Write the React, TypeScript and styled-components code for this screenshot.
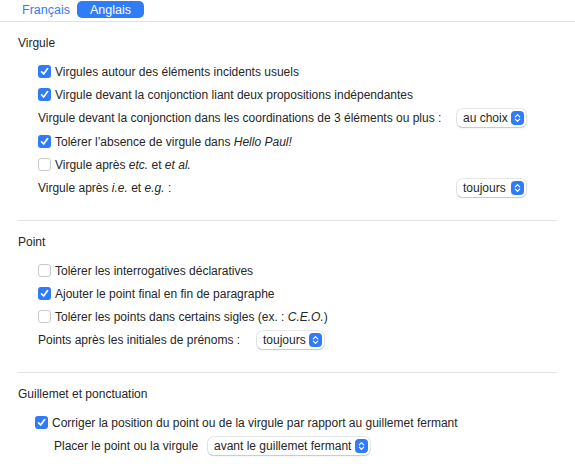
import React from 'react';
import styled, { createGlobalStyle } from 'styled-components';

const ACCENT = '#2f7cf6';
const TEXT = '#262626';

const GlobalStyle = createGlobalStyle`
  html, body {
    margin: 0;
    padding: 0;
    background: #ffffff;
  }
  body {
    font-family: "Liberation Sans", Arial, sans-serif;
    font-size: 12px;
    color: ${TEXT};
  }
`;

const Page = styled.div`
  width: 575px;
  height: 474px;
  overflow: hidden;
  background: #fff;
`;

const TabBar = styled.div`
  display: flex;
  align-items: center;
  gap: 7px;
  height: 22px;
  padding-left: 22px;
  border-bottom: 1px solid #e2e2e2;
  box-sizing: border-box;
`;

const Tab = styled.div<{ $active?: boolean }>`
  height: 17px;
  margin-top: -2px;
  padding: 0 ${p => (p.$active ? '13px' : '0')};
  display: flex;
  align-items: center;
  border-radius: 5px;
  font-size: 12.5px;
  color: ${p => (p.$active ? '#fff' : ACCENT)};
  background: ${p => (p.$active ? ACCENT : 'transparent')};
`;

const Section = styled.section<{ $last?: boolean }>`
  margin: 0 18px;
  padding: 14px 0 ${p => (p.$last ? '0' : '20px')};
  border-bottom: ${p => (p.$last ? 'none' : '1px solid #e2e2e2')};
`;

const Title = styled.div`
  height: 15px;
  line-height: 15px;
  margin-bottom: 9px;
`;

const Rows = styled.div<{ $indent: number }>`
  display: flex;
  flex-direction: column;
  padding-left: ${p => p.$indent}px;
`;

const Row = styled.div<{ $tall?: boolean; $inset?: number }>`
  display: flex;
  align-items: center;
  height: ${p => (p.$tall ? 24 : 23)}px;
  padding-left: ${p => p.$inset || 0}px;
  white-space: nowrap;
`;

const Box = styled.span<{ $checked?: boolean }>`
  width: 13px;
  height: 13px;
  box-sizing: border-box;
  border-radius: 3px;
  margin-right: 4px;
  display: inline-flex;
  align-items: center;
  justify-content: center;
  background: ${p => (p.$checked ? ACCENT : '#fff')};
  border: ${p => (p.$checked ? 'none' : '1px solid #c9c9c9')};
`;

const Label = styled.span<{ $pad?: number }>`
  display: inline-block;
  flex-shrink: 0;
  width: ${p => (p.$pad ? `${p.$pad}px` : 'auto')};
  em {
    font-style: italic;
  }
`;

const SelectBox = styled.div<{ $width: number }>`
  width: ${p => p.$width}px;
  flex-shrink: 0;
  height: 18px;
  box-sizing: border-box;
  display: flex;
  align-items: center;
  justify-content: space-between;
  padding: 0 2px 0 6px;
  background: #fff;
  border-radius: 5px;
  box-shadow: 0 0 0 0.5px rgba(0, 0, 0, 0.18), 0 1px 1.5px rgba(0, 0, 0, 0.15);
`;

const Stepper = styled.span`
  width: 13px;
  height: 14px;
  flex-shrink: 0;
  border-radius: 4px;
  background: ${ACCENT};
  display: inline-flex;
  align-items: center;
  justify-content: center;
`;

const Check = ({ on }: { on?: boolean }) => (
  <Box $checked={on}>
    {on && (
      <svg width="9" height="9" viewBox="0 0 9 9">
        <path d="M1.6 4.8 L3.7 7 L7.6 1.6" fill="none" stroke="#fff" strokeWidth="1.7" strokeLinecap="round" strokeLinejoin="round" />
      </svg>
    )}
  </Box>
);

const Select = ({ value, width }: { value: string; width: number }) => (
  <SelectBox $width={width}>
    <span>{value}</span>
    <Stepper>
      <svg width="7" height="10" viewBox="0 0 7 10">
        <path d="M1.3 3.8 L3.5 1.6 L5.7 3.8 M1.3 6.2 L3.5 8.4 L5.7 6.2" fill="none" stroke="#fff" strokeWidth="1.2" strokeLinecap="round" strokeLinejoin="round" />
      </svg>
    </Stepper>
  </SelectBox>
);

export default function App() {
  return (
    <Page>
      <GlobalStyle />
      <TabBar>
        <Tab>Français</Tab>
        <Tab $active>Anglais</Tab>
      </TabBar>

      <Section>
        <Title>Virgule</Title>
        <Rows $indent={20}>
          <Row><Check on /><Label>Virgules autour des éléments incidents usuels</Label></Row>
          <Row><Check on /><Label>Virgule devant la conjonction liant deux propositions indépendantes</Label></Row>
          <Row $tall>
            <Label $pad={419}>Virgule devant la conjonction dans les coordinations de 3 éléments ou plus :</Label>
            <Select value="au choix" width={69} />
          </Row>
          <Row><Check on /><Label>Tolérer l’absence de virgule dans <em>Hello Paul!</em></Label></Row>
          <Row><Check /><Label>Virgule après <em>etc.</em> et <em>et al.</em></Label></Row>
          <Row $tall>
            <Label $pad={419}>Virgule après <em>i.e.</em> et <em>e.g.</em> :</Label>
            <Select value="toujours" width={69} />
          </Row>
        </Rows>
      </Section>

      <Section>
        <Title>Point</Title>
        <Rows $indent={20}>
          <Row><Check /><Label>Tolérer les interrogatives déclaratives</Label></Row>
          <Row><Check on /><Label>Ajouter le point final en fin de paragraphe</Label></Row>
          <Row><Check /><Label>Tolérer les points dans certains sigles (ex. : <em>C.E.O.</em>)</Label></Row>
          <Row $tall>
            <Label $pad={219}>Points après les initiales de prénoms :</Label>
            <Select value="toujours" width={67} />
          </Row>
        </Rows>
      </Section>

      <Section $last>
        <Title>Guillemet et ponctuation</Title>
        <Rows $indent={17}>
          <Row><Check on /><Label>Corriger la position du point ou de la virgule par rapport au guillemet fermant</Label></Row>
          <Row $tall $inset={19}>
            <Label $pad={154}>Placer le point ou la virgule</Label>
            <Select value="avant le guillemet fermant" width={162} />
          </Row>
        </Rows>
      </Section>
    </Page>
  );
}
